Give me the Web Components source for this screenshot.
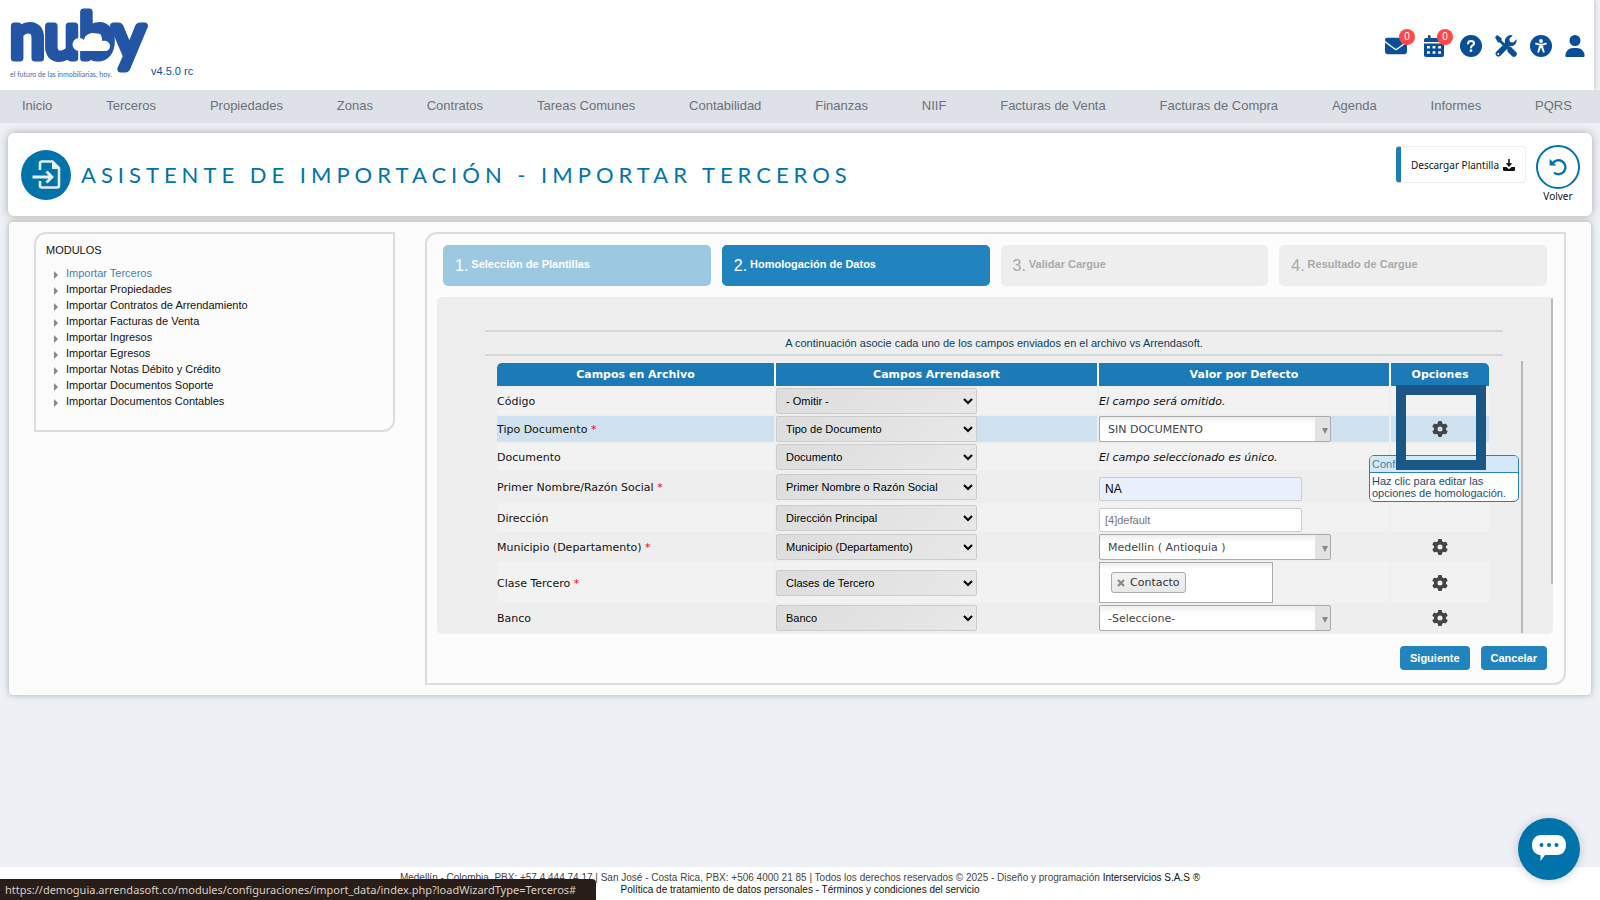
<!DOCTYPE html>
<html lang="es">
<head>
<meta charset="utf-8">
<meta name="viewport" content="width=device-width, initial-scale=1">
<title>Asistente de Importación - Importar Terceros</title>
<style>
    body {
        margin: 0;
        min-height: 100vh;
        display: flex;
        flex-direction: column;
        background: #edf0f5;
        font: 11px/16px "Liberation Sans", Arial, sans-serif;
        color: #111;
    }
    main {
        flex: 1;
        display: flex;
        flex-direction: column;
        gap: 6px;
        padding: 10px 8px;
    }
</style>
</head>
<body>
    <nuby-header version="v4.5.0 rc"></nuby-header>
    <nuby-nav></nuby-nav>
    <main>
        <title-card>Asistente de Importación - Importar Terceros</title-card>
        <content-card>
            <module-list slot="side"></module-list>
            <import-wizard>
                <mapping-table></mapping-table>
            </import-wizard>
        </content-card>
    </main>
    <nuby-footer></nuby-footer>
    <chat-button></chat-button>
    <link-status>https://demoguia.arrendasoft.co/modules/configuraciones/import_data/index.php?loadWizardType=Terceros#</link-status>

<script>
const ICONS = {
    mail: ['0 0 512 512', '<path d="M48 64C21.5 64 0 85.5 0 112c0 15.1 7.1 29.3 19.2 38.4L236.8 313.6c11.4 8.5 27 8.5 38.4 0L492.8 150.4c12.1-9.1 19.2-23.3 19.2-38.4c0-26.5-21.5-48-48-48H48zM0 176V384c0 35.3 28.7 64 64 64H448c35.3 0 64-28.7 64-64V176L294.4 339.2c-22.8 17.1-54 17.1-76.8 0L0 176z"/>'],
    calendar: ['0 0 22 22', '<path fill-rule="evenodd" d="M5 1.2a1.3 1.3 0 0 1 2.6 0V3h6.800V1.200a1.300 1.300 0 0 1 2.600 0V3H19a2 2 0 0 1 2 2v2H1V5a2 2 0 0 1 2-2h2zM1 8.400h20V20a2 2 0 0 1-2 2H3a2 2 0 0 1-2-2zM4 11v2.600h2.800V11zm5.600 0v2.600h2.800V11zm5.600 0v2.600H18V11zM4 16.200v2.600h2.800v-2.600zm5.600 0v2.600h2.800v-2.600zm5.600 0v2.600H18v-2.600z"/>'],
    help: ['0 0 22 22', '<circle cx="11" cy="11" r="11"/><path d="M8 8.500C8.200 6.700 9.400 6 11 6c1.800 0 3 .9 3 2.400 0 1.900-3 2-3 4.100" fill="none" stroke="#fff" stroke-width="2.100" stroke-linecap="round"/><circle cx="11" cy="15.700" r="1.400" fill="#fff"/>'],
    tools: ['0 0 22 22', '<path d="M0 2.200 2.200 0 6.600 3.200v2.400l4 4-1.800 1.800-4-4H3z"/><path d="M12 13.500a3 3 0 0 1 4-1.600l5 5a2.900 2.900 0 0 1-4.100 4.100l-4.300-4.300z"/><path fill-rule="evenodd" d="M21.600 4.300 18.200 7.600 15 7l-.7-3.200L17.700.4A6.200 6.200 0 0 0 10 8L1 16.900A3 3 0 0 0 5.200 21l8-8.200 1-1.600A6.200 6.200 0 0 0 21.600 4.300zM3.200 17.900a1 1 0 1 1 0 2 1 1 0 0 1 0-2z"/>'],
    access: ['0 0 22 22', '<circle cx="11" cy="11" r="11"/><circle cx="11" cy="6" r="1.900" fill="#fff"/><path d="m6 8.700 5 1.200 5-1.200M8.300 16.800l1.400-4V10h2.600v2.800l1.400 4M9.800 12h2.400" fill="none" stroke="#fff" stroke-width="1.900" stroke-linecap="round"/>'],
    user: ['0 0 448 512', '<path d="M224 256A128 128 0 1 0 224 0a128 128 0 1 0 0 256zm-45.700 48C79.800 304 0 383.800 0 482.300C0 498.700 13.300 512 29.700 512H418.300c16.400 0 29.700-13.300 29.700-29.700C448 383.800 368.200 304 269.700 304H178.300z"/>'],
    download: ['0 0 12 12', '<path d="M5.200 0h1.600v4.300h2.500L6 8 2.700 4.300h2.500z"/><path d="M0 8h3.500L6 10.200 8.500 8H12v2.800a1.200 1.200 0 0 1-1.200 1.200H1.200A1.200 1.200 0 0 1 0 10.800z"/>'],
    undo: ['0 0 18 18', '<path d="M3.500 5.500A7 7 0 1 1 5 14.700" fill="none" stroke="currentColor" stroke-width="2.300"/><path d="M.6.800v6.700h6.700z"/>'],
    importFile: ['0 0 50 50', '<circle cx="25" cy="25" r="25" fill="#0073ab"/><path d="M19 20v-6.500a2 2 0 0 1 2-2h10.500l6.500 6.500v17.500a2 2 0 0 1-2 2H21a2 2 0 0 1-2-2V31" fill="none" stroke="#e8eef3" stroke-width="2.600"/><path d="M31 11v8h8z" fill="#e8eef3"/><path d="M11.500 27H30m-4.500-5.500L31 27l-5.500 5.500" fill="none" stroke="#e8eef3" stroke-width="2.800"/>'],
    gear: ['0 0 512 512', '<path d="M495.900 166.600c3.200 8.700 .5 18.400-6.400 24.600l-43.300 39.400c1.100 8.300 1.700 16.800 1.700 25.400s-.6 17.100-1.700 25.400l43.300 39.400c6.900 6.200 9.600 15.900 6.400 24.600c-4.400 11.900-9.700 23.300-15.800 34.300l-4.700 8.100c-6.600 11-14 21.400-22.100 31.200c-5.900 7.200-15.700 9.600-24.500 6.800l-55.700-17.700c-13.400 10.300-28.200 18.900-44 25.400l-12.500 57.100c-2 9.100-9 16.300-18.200 17.800c-13.800 2.300-28 3.500-42.500 3.500s-28.700-1.200-42.500-3.500c-9.200-1.500-16.200-8.700-18.200-17.800l-12.500-57.100c-15.800-6.500-30.600-15.100-44-25.400L83.100 425.900c-8.800 2.800-18.600 .3-24.500-6.800c-8.100-9.800-15.500-20.200-22.100-31.200l-4.700-8.100c-6.100-11-11.400-22.400-15.800-34.300c-3.200-8.700-.5-18.400 6.400-24.600l43.300-39.400C64.600 273.100 64 264.600 64 256s.6-17.100 1.700-25.400L22.400 191.200c-6.900-6.200-9.600-15.900-6.400-24.600c4.400-11.900 9.700-23.300 15.800-34.300l4.700-8.100c6.600-11 14-21.400 22.100-31.200c5.900-7.200 15.700-9.600 24.500-6.800l55.700 17.700c13.400-10.300 28.200-18.900 44-25.400l12.500-57.100c2-9.100 9-16.300 18.200-17.800C227.300 1.200 241.500 0 256 0s28.700 1.200 42.500 3.500c9.200 1.500 16.200 8.700 18.200 17.800l12.500 57.100c15.800 6.500 30.600 15.100 44 25.400l55.700-17.700c8.800-2.800 18.600-.3 24.500 6.800c8.100 9.800 15.500 20.200 22.100 31.200l4.700 8.100c6.100 11 11.400 22.400 15.800 34.300zM256 336a80 80 0 1 0 0-160 80 80 0 1 0 0 160z"/>'],
    chat: ['0 0 34 28', '<path d="M9 0h16c5.500 0 9 4 9 10s-3.500 10-9 10H13l-4.500 6V20C3 19.500 0 15.500 0 10S3.500 0 9 0z"/><g fill="#0073ab"><circle cx="9.500" cy="10" r="2"/><circle cx="17" cy="10" r="2"/><circle cx="24.500" cy="10" r="2"/></g>'],
    close: ['0 0 8 8', '<path d="m1 1 6 6m0-6L1 7" fill="none" stroke="currentColor" stroke-width="2.200"/>']
};

function icon(name, width, height = width) {
    const [box, body] = ICONS[name];
    return `<svg width="${width}" height="${height}" viewBox="${box}" fill="currentColor" aria-hidden="true">${body}</svg>`;
}

class BaseElement extends HTMLElement {
    constructor() {
        super();
        this.attachShadow({mode: 'open'});
    }

    connectedCallback() {
        this.shadowRoot.innerHTML = `
        <style>
            * { box-sizing: border-box; }
            svg { display: block; }
            a { color: inherit; text-decoration: none; }
            button { font: inherit; cursor: pointer; }
            ${this.getStyle()}
        </style>
        ${this.getMarkup()}`;
    }
}

class NubyHeader extends BaseElement {
    getMarkup() {
        return `
        <a class="brand" href="#" aria-label="nuby">
            <svg width="143" height="74" viewBox="0 0 143 74">
                <text x="0" y="50" font-family="Lato, sans-serif" font-size="62" fill="#2455a4" stroke="#2455a4" stroke-width="7" stroke-linejoin="round">nuby</text>
                <path d="M69 43a6 6 0 0 1 0-13 6 6 0 0 1 5 2c1-5 5-7 9-7 6 0 9 4 9 8 4-1 8 1 8 5 0 3-2 5-5 5z" fill="#fff"/>
                <text x="0" y="69" font-family="Lato, sans-serif" font-size="7" fill="#3f68b2">el futuro de las inmobiliarias, hoy.</text>
            </svg>
            <span>${this.getAttribute('version')}</span>
        </a>
        <div class="tools">
            <button aria-label="Mensajes">${icon('mail', 22)}<b>0</b></button>
            <button aria-label="Calendario">${icon('calendar', 22)}<b>0</b></button>
            <button aria-label="Ayuda">${icon('help', 22)}</button>
            <button aria-label="Herramientas">${icon('tools', 22)}</button>
            <button aria-label="Accesibilidad">${icon('access', 22)}</button>
            <button aria-label="Usuario">${icon('user', 20, 22)}</button>
        </div>`;
    }

    getStyle() {
        return `
        :host {
            display: flex;
            justify-content: space-between;
            align-items: center;
            height: 90px;
            margin-right: 6px;
            padding: 0 9px 0 10px;
            box-sizing: border-box;
            background: #fff;
            box-shadow: 1px 0 4px #ccc;
        }
        .brand { display: flex; align-items: flex-end; color: #0b4f9c; }
        .brand svg { overflow: visible; }
        .brand span { margin-left: -2px; padding-bottom: 3px; }
        .tools { display: flex; align-items: center; gap: 13px; padding-top: 2px; color: #094e96; }
        .tools button {
            position: relative;
            padding: 0;
            border: 0;
            background: none;
            color: inherit;
        }
        .tools button:first-child { margin-right: 3px; }
        .tools button:nth-child(2) { margin-right: 2px; }
        .tools b {
            position: absolute;
            top: -6px;
            right: -8px;
            width: 16px;
            border-radius: 8px;
            background: #ff4949;
            color: #fff;
            font: 10px/16px "Liberation Sans", sans-serif;
        }`;
    }
}
customElements.define('nuby-header', NubyHeader);

class NubyNav extends BaseElement {
    getMarkup() {
        const items = ['Inicio', 'Terceros', 'Propiedades', 'Zonas', 'Contratos', 'Tareas Comunes', 'Contabilidad', 'Finanzas', 'NIIF', 'Facturas de Venta', 'Facturas de Compra', 'Agenda', 'Informes', 'PQRS'];
        return `<nav>${items.map(item => `<a href="#">${item}</a>`).join('')}</nav>`;
    }

    getStyle() {
        return `
        :host { display: block; position: relative; background: #dee1e8; color: #6c7178; }
        nav {
            display: flex;
            justify-content: space-between;
            padding: 8px 28px 9px 22px;
            font-size: 13px;
        }`;
    }
}
customElements.define('nuby-nav', NubyNav);

class TitleCard extends BaseElement {
    getMarkup() {
        return `
        ${icon('importFile', 50)}
        <h1><slot></slot></h1>
        <button class="template">Descargar Plantilla ${icon('download', 12)}</button>
        <a class="back" href="#"><i>${icon('undo', 18)}</i>Volver</a>`;
    }

    getStyle() {
        return `
        :host {
            display: flex;
            align-items: center;
            gap: 10px;
            padding: 12px 12px 12px 13px;
            border-radius: 6px;
            background: #fff;
            box-shadow: 0 0 8px #aaa;
        }
        h1 {
            flex: 1;
            margin: 0;
            color: #0073ab;
            font: 22px/30px Lato, sans-serif;
            letter-spacing: 5px;
            text-transform: uppercase;
        }
        .template {
            display: flex;
            align-items: center;
            align-self: flex-start;
            gap: 4px;
            height: 37px;
            margin-top: 1px;
            padding: 0 10px;
            border: 1px solid #eee;
            border-left: 5px solid #1d7bb7;
            border-radius: 4px;
            background: #fff;
            color: #111;
            font: 10px "Noto Sans", sans-serif;
        }
        .back {
            display: flex;
            flex-direction: column;
            align-items: center;
            color: #111;
            font: 10px/15px "Noto Sans", sans-serif;
        }
        .back i {
            display: flex;
            align-items: center;
            justify-content: center;
            width: 44px;
            height: 44px;
            border: 2px solid #0073ab;
            border-radius: 50%;
            color: #0073ab;
        }`;
    }
}
customElements.define('title-card', TitleCard);

class ContentCard extends BaseElement {
    getMarkup() {
        return `<slot name="side"></slot><slot></slot>`;
    }

    getStyle() {
        return `
        :host {
            display: flex;
            align-items: flex-start;
            gap: 30px;
            margin: 0 1px;
            padding: 10px 25px;
            border-radius: 4px;
            background: #fcfcfc;
            box-shadow: 0 0 6px #aaa;
        }
        ::slotted(import-wizard) { flex: 1; }`;
    }
}
customElements.define('content-card', ContentCard);

class ModuleList extends BaseElement {
    getMarkup() {
        const modules = ['Terceros', 'Propiedades', 'Contratos de Arrendamiento', 'Facturas de Venta', 'Ingresos', 'Egresos', 'Notas Débito y Crédito', 'Documentos Soporte', 'Documentos Contables'];
        return `
        <h2>MODULOS</h2>
        <ul>${modules.map(name => `<li><a href="#">Importar ${name}</a></li>`).join('')}</ul>`;
    }

    getStyle() {
        return `
        :host {
            flex: 0 0 361px;
            padding: 8px 10px 21px;
            box-sizing: border-box;
            border: 2px solid #ddd;
            border-radius: 12px 0;
        }
        h2 { margin: 0 0 7px; font-size: 11px; font-weight: 400; }
        ul { margin: 0; padding: 0 0 0 8px; list-style: none; }
        li { display: flex; align-items: center; gap: 8px; }
        li::before {
            content: "";
            margin-top: 4px;
            border: 4px solid transparent;
            border-left-color: #888;
            border-right: 0;
        }
        li:first-child { color: #3f83b8; }`;
    }
}
customElements.define('module-list', ModuleList);

class ImportWizard extends BaseElement {
    getMarkup() {
        return `
        <ol>
            <li class="done"><span>1.</span>Selección de Plantillas</li>
            <li class="current"><span>2.</span>Homologación de Datos</li>
            <li><span>3.</span>Validar Cargue</li>
            <li><span>4.</span>Resultado de Cargue</li>
        </ol>
        <section>
            <p>A continuación asocie cada uno de los campos enviados en el archivo vs Arrendasoft.</p>
            <slot></slot>
        </section>
        <footer>
            <button>Siguiente</button>
            <button>Cancelar</button>
        </footer>`;
    }

    getStyle() {
        return `
        :host {
            display: block;
            padding: 11px 11px 13px 10px;
            border: 2px solid #ddd;
            border-radius: 12px 0;
        }
        ol {
            display: flex;
            gap: 11px;
            margin: 0 6px 11px;
            padding: 0;
            list-style: none;
        }
        li {
            flex: 1;
            display: flex;
            align-items: center;
            gap: 3px;
            height: 41px;
            padding: 0 12px 3px;
            border-radius: 5px;
            background: #eee;
            color: #aaa;
            font-weight: 700;
        }
        li span { padding-top: 3px; font-size: 16px; font-weight: 400; }
        .done { background: #9dc8e2; color: #fff; }
        .current { background: #2184be; color: #fff; }
        section {
            position: relative;
            padding: 33px 30px 1px 48px;
            border-radius: 5px;
            background: #eee;
        }
        section::after {
            content: "";
            position: absolute;
            top: 1px;
            right: 0;
            width: 2px;
            height: 85%;
            border-radius: 2px;
            background: #bbb;
        }
        p {
            margin: 0 20px 5px 0;
            padding: 3px 0;
            border: solid #d8d8d8;
            border-width: 2px 0;
            color: #0d3c5c;
            text-align: center;
        }
        footer { display: flex; justify-content: flex-end; gap: 11px; margin: 12px 6px 0; }
        button {
            height: 24px;
            padding: 0 10px;
            border: 0;
            border-radius: 4px;
            background: #2184be;
            color: #fff;
            font-weight: 700;
        }`;
    }
}
customElements.define('import-wizard', ImportWizard);

class HelpTip extends BaseElement {
    getMarkup() {
        return `<b>${this.getAttribute('heading')}</b><slot></slot>`;
    }

    getStyle() {
        return `
        :host {
            display: block;
            width: 150px;
            padding: 0 2px 2px;
            box-sizing: border-box;
            border: 1px solid #2a7fc0;
            border-radius: 5px;
            background: #fff;
            color: #1c4e6e;
            font: 11px/12px "Liberation Sans", Arial, sans-serif;
            text-align: left;
        }
        b {
            display: block;
            margin: 0 -2px 2px;
            padding: 0 2px;
            border-bottom: 1px solid #2a7fc0;
            border-radius: 4px 4px 0 0;
            background: #d3e9f8;
            color: #5080a4;
            font-weight: 400;
            line-height: 16px;
        }`;
    }
}
customElements.define('help-tip', HelpTip);

class MappingTable extends BaseElement {
    getMarkup() {
        const rows = [
            {label: 'Código', field: '- Omitir -', note: 'El campo será omitido.'},
            {label: 'Tipo Documento', required: true, field: 'Tipo de Documento', select: 'SIN DOCUMENTO', active: true},
            {label: 'Documento', field: 'Documento', note: 'El campo seleccionado es único.'},
            {label: 'Primer Nombre/Razón Social', required: true, field: 'Primer Nombre o Razón Social', input: 'value="NA" class="filled"'},
            {label: 'Dirección', field: 'Dirección Principal', input: 'placeholder="[4]default"'},
            {label: 'Municipio (Departamento)', required: true, field: 'Municipio (Departamento)', select: 'Medellin ( Antioquia )'},
            {label: 'Clase Tercero', required: true, field: 'Clases de Tercero', tag: 'Contacto'},
            {label: 'Banco', field: 'Banco', select: '-Seleccione-'}
        ];
        return `
        <table>
            <colgroup><col class="col-file"><col class="col-field"><col><col class="col-options"></colgroup>
            <thead>
                <tr><th>Campos en Archivo</th><th>Campos Arrendasoft</th><th>Valor por Defecto</th><th>Opciones</th></tr>
            </thead>
            <tbody>${rows.map((row, i) => this.getRow(row, i)).join('')}</tbody>
        </table>`;
    }

    getRow(row, i) {
        return `
        <tr${row.active ? ' class="active"' : ''}>
            <td><label for="field${i}">${row.label}${row.required ? ' <em>*</em>' : ''}</label></td>
            <td><select id="field${i}" class="field"><option>${row.field}</option></select></td>
            <td>${this.getValue(row)}</td>
            <td class="options">
                ${row.select || row.tag ? `<button class="gear" aria-label="Configurar ${row.label}">${icon('gear', 16)}</button>` : ''}
                ${row.active ? '<help-tip heading="Config. Opciones">Haz clic para editar las opciones de homologación.</help-tip><div class="focus-frame"></div>' : ''}
            </td>
        </tr>`;
    }

    getValue(row) {
        if (row.note) return `<i>${row.note}</i>`;
        if (row.select) return `<span class="chosen"><select aria-label="Valor de ${row.label}"><option>${row.select}</option></select></span>`;
        if (row.tag) return `<div class="tags"><span><button aria-label="Quitar ${row.tag}">${icon('close', 8)}</button>${row.tag}</span></div>`;
        return `<input type="text" aria-label="Valor de ${row.label}" ${row.input}>`;
    }

    getStyle() {
        return `
        :host {
            display: block;
            padding: 0 30px 0 10px;
            border-right: 2px solid #b8b8b8;
        }
        table {
            width: 100%;
            table-layout: fixed;
            border-spacing: 2px;
            font: 11px/16px Verdana, "DejaVu Sans", sans-serif;
        }
        .col-file { width: 277px; }
        .col-field { width: 321px; }
        .col-options { width: 98px; }
        th {
            height: 23px;
            padding: 1px 0 0;
            background: #1c7ab7;
            box-shadow: 2px 0 #fff;
            color: #fff;
        }
        th:first-child { border-top-left-radius: 5px; }
        th:last-child { border-top-right-radius: 5px; box-shadow: none; }
        td { height: 26px; padding: 0; }
        tbody tr:nth-child(odd) td { background: #f2f2f2; }
        tr.active td { background: #cfe1ef; }
        label, i { display: block; padding-top: 2px; }
        em { color: #f00; font-style: normal; }
        select { display: block; height: 26px; border-radius: 2px; }
        .field {
            width: 201px;
            padding: 0 0 0 5px;
            border: 1px solid #ccc;
            background: linear-gradient(135deg, #ddd, #e8e8e8);
            color: #000;
            font: 11px "Liberation Sans", Arial, sans-serif;
        }
        .chosen { position: relative; display: block; width: 232px; }
        .chosen select {
            appearance: none;
            width: 100%;
            padding: 2px 8px 0;
            border: 1px solid #aaa;
            background: linear-gradient(90deg, transparent calc(100% - 15px), #e2e2e2 calc(100% - 15px)), linear-gradient(#eee, #fff 30%);
            color: #444;
            font: inherit;
        }
        .chosen::after {
            content: "";
            position: absolute;
            top: 12px;
            right: 3px;
            border: 3px solid transparent;
            border-top: 6px solid #888;
            border-bottom: 0;
        }
        input {
            display: block;
            width: 203px;
            height: 24px;
            margin-top: 5px;
            padding: 0 5px;
            border: 1px solid #ccc;
            border-radius: 2px;
            background: #fff;
            font: 11px "Liberation Sans", Arial, sans-serif;
        }
        input.filled { background: #e8f0fe; font-size: 12px; }
        .tags {
            display: flex;
            align-items: center;
            width: 174px;
            height: 41px;
            padding: 0 11px;
            border: 1px solid #aaa;
            background: linear-gradient(#eee, #fff 15%);
            color: #333;
        }
        .tags span {
            display: flex;
            align-items: center;
            gap: 5px;
            height: 21px;
            padding: 0 5px;
            border: 1px solid #aaa;
            border-radius: 3px;
            background: linear-gradient(#f4f4f4, #e8e8e8);
        }
        .tags button { padding: 0; border: 0; background: none; color: #888; }
        td.options { position: relative; }
        .gear { display: block; margin: 0 auto; padding: 0; border: 0; background: none; color: #444; }
        help-tip { position: absolute; z-index: 1; top: 39px; left: -22px; }
        .focus-frame {
            position: absolute;
            z-index: 2;
            top: -31px;
            left: 5px;
            width: 90px;
            height: 85px;
            border: 10px solid #1a5784;
            pointer-events: none;
        }`;
    }
}
customElements.define('mapping-table', MappingTable);

class NubyFooter extends BaseElement {
    getMarkup() {
        return `
        <div>Medellín - Colombia, PBX: +57 4 444 74 17 | San José - Costa Rica, PBX: +506 4000 21 85 | Todos los derechos reservados © 2025 - Diseño y programación <a href="#">Interservicios S.A.S ®</a></div>
        <div><a href="#">Política de tratamiento de datos personales</a> - <a href="#">Términos y condiciones del servicio</a></div>`;
    }

    getStyle() {
        return `
        :host {
            display: block;
            padding: 5px 0 4px;
            background: #fff;
            color: #444;
            font-size: 10px;
            line-height: 12px;
            text-align: center;
        }
        div + div, a { color: #111; }`;
    }
}
customElements.define('nuby-footer', NubyFooter);

class ChatButton extends BaseElement {
    getMarkup() {
        return `<button aria-label="Abrir chat">${icon('chat', 34, 28)}</button>`;
    }

    getStyle() {
        return `
        :host { position: fixed; right: 20px; bottom: 20px; z-index: 5; }
        button {
            display: flex;
            align-items: center;
            justify-content: center;
            width: 62px;
            height: 62px;
            padding: 0;
            border: 0;
            border-radius: 50%;
            background: #0073ab;
            box-shadow: 0 1px 10px #0003;
            color: #fff;
        }`;
    }
}
customElements.define('chat-button', ChatButton);

class LinkStatus extends BaseElement {
    getMarkup() {
        return `<slot></slot>`;
    }

    getStyle() {
        return `
        :host {
            position: fixed;
            left: 0;
            bottom: 0;
            z-index: 6;
            padding: 0 20px 0 5px;
            border-top-right-radius: 4px;
            background: #281d18;
            color: #dccfc4;
            font: 11px/21px "Noto Sans", sans-serif;
        }`;
    }
}
customElements.define('link-status', LinkStatus);
</script>
</body>
</html>
